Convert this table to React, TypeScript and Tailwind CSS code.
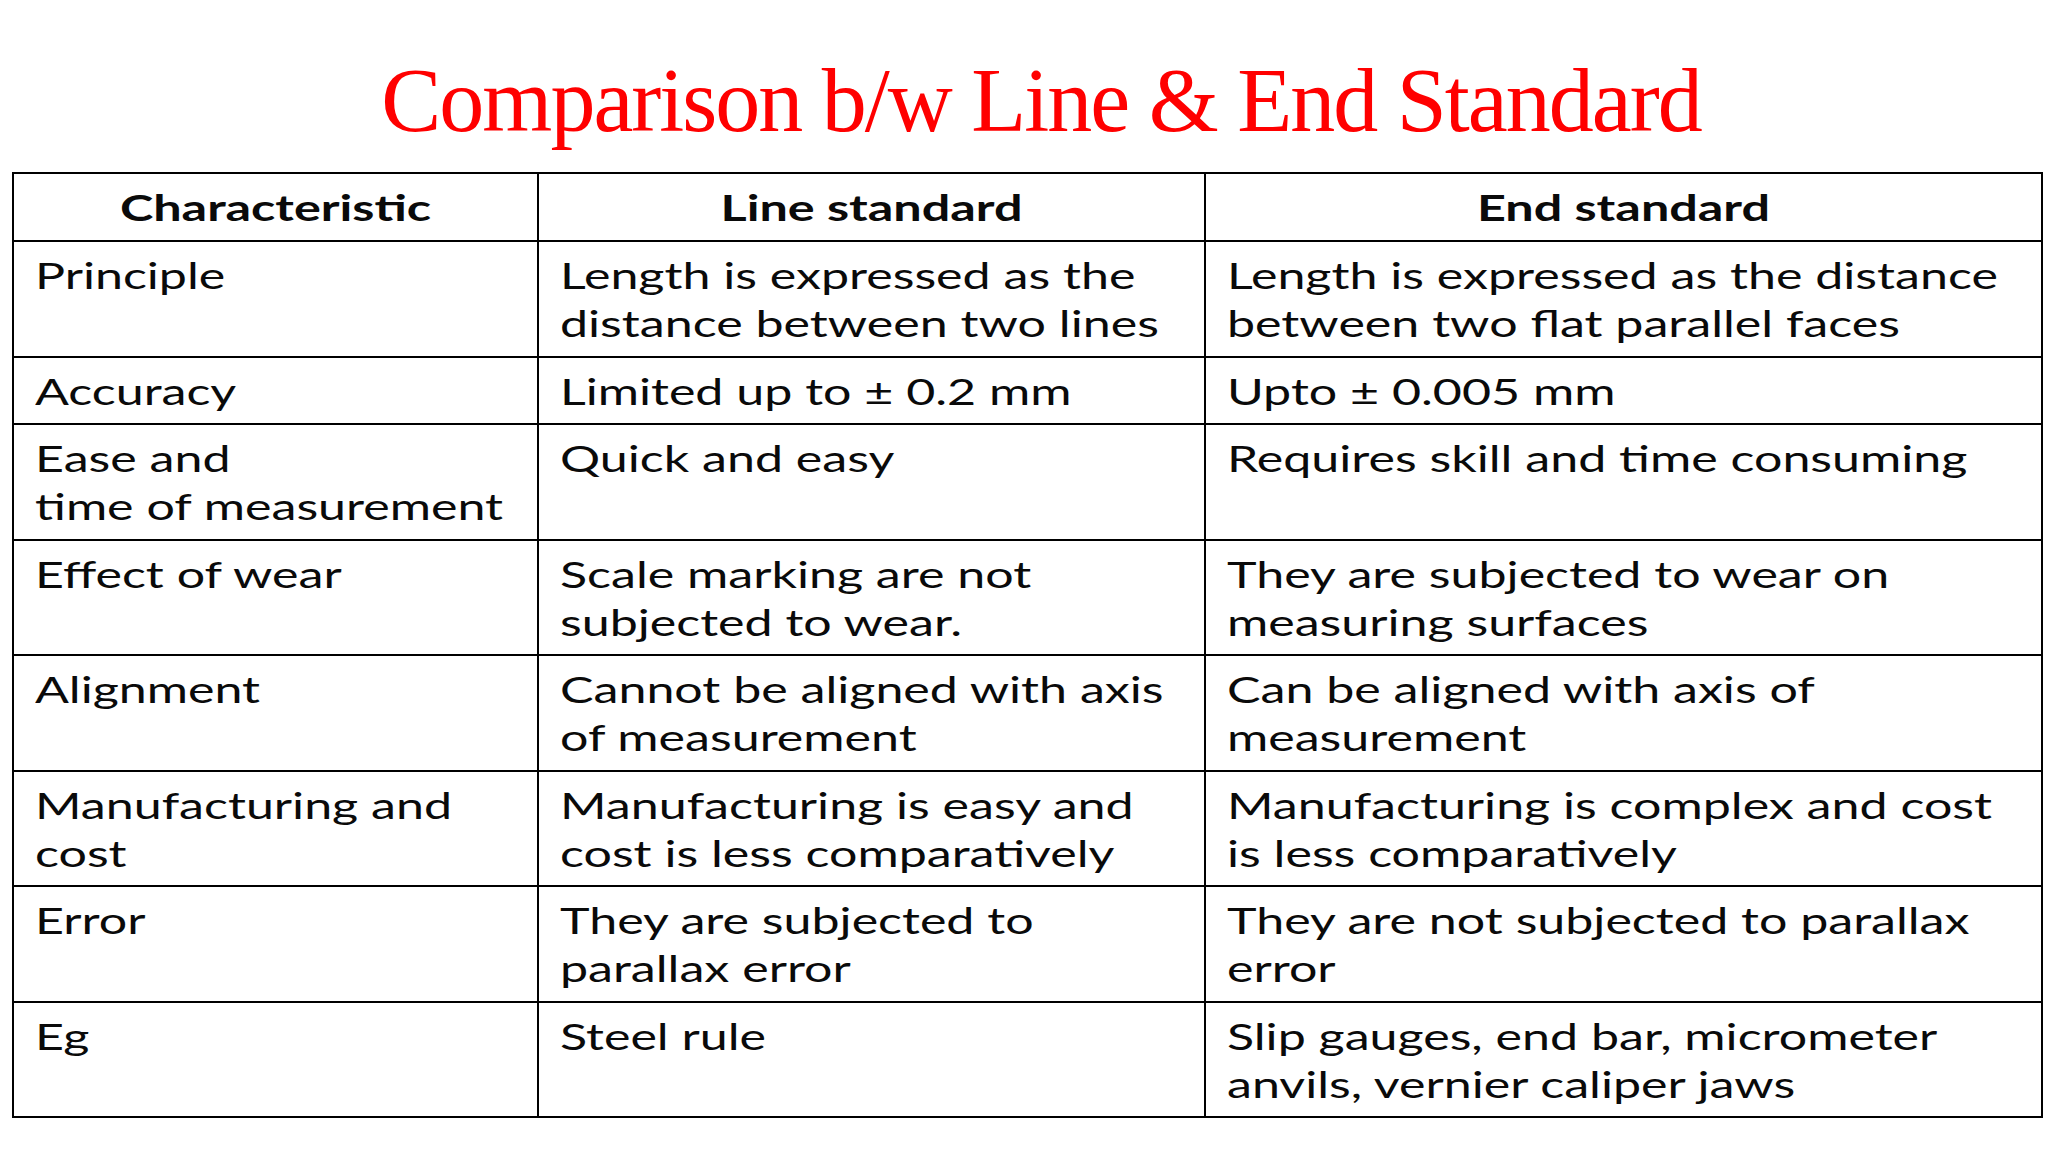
import React from "react";

const rows: [string, string, string][] = [
  ["Principle", "Length is expressed as the\ndistance between two lines", "Length is expressed as the distance\nbetween two flat parallel faces"],
  ["Accuracy", "Limited up to \u00B1 0.2 mm", "Upto \u00B1 0.005 mm"],
  ["Ease and\ntime of measurement", "Quick and easy", "Requires skill and time consuming"],
  ["Effect of wear", "Scale marking are not\nsubjected to wear.", "They are subjected to wear on\nmeasuring surfaces"],
  ["Alignment", "Cannot be aligned with axis\nof measurement", "Can be aligned with axis of\nmeasurement"],
  ["Manufacturing and\ncost", "Manufacturing is easy and\ncost is less comparatively", "Manufacturing is complex and cost\nis less comparatively"],
  ["Error", "They are subjected to\nparallax error", "They are not subjected to parallax\nerror"],
  ["Eg", "Steel rule", "Slip gauges, end bar, micrometer\nanvils, vernier caliper jaws"],
];

export default function App() {
  return (
    <div className="w-[2048px] h-[1152px] bg-white overflow-hidden">
      <h1
        className="pt-[56px] pl-[34px] text-center text-[90px] leading-[90px] tracking-[-2px] text-[#ff0000]"
        style={{ fontFamily: '"Liberation Serif", "Times New Roman", serif' }}
      >
        Comparison b/w Line &amp; End Standard
      </h1>
      <table
        className="mt-[26px] ml-[12px] w-[2029px] table-fixed border-collapse text-[#0a0a0a] text-[37px] leading-[48px]"
        style={{ fontFamily: 'Lato, "Noto Sans", sans-serif' }}
      >
        <colgroup>
          <col className="w-[525px]" />
          <col className="w-[667px]" />
          <col className="w-[837px]" />
        </colgroup>
        <thead>
          <tr>
            {["Characteristic", "Line standard", "End standard"].map((h) => (
              <th key={h} className="border-2 border-black px-[21px] py-[9px] font-bold">
                <div className="text-center whitespace-pre origin-center scale-x-[1.36]">{h}</div>
              </th>
            ))}
          </tr>
        </thead>
        <tbody>
          {rows.map((r, i) => (
            <tr key={i}>
              {r.map((c, j) => (
                <td key={j} className="border-2 border-black px-[21px] pt-[9px] pb-[8.5px] align-top">
                  <div className="whitespace-pre origin-top-left scale-x-[1.355]">{c}</div>
                </td>
              ))}
            </tr>
          ))}
        </tbody>
      </table>
    </div>
  );
}
